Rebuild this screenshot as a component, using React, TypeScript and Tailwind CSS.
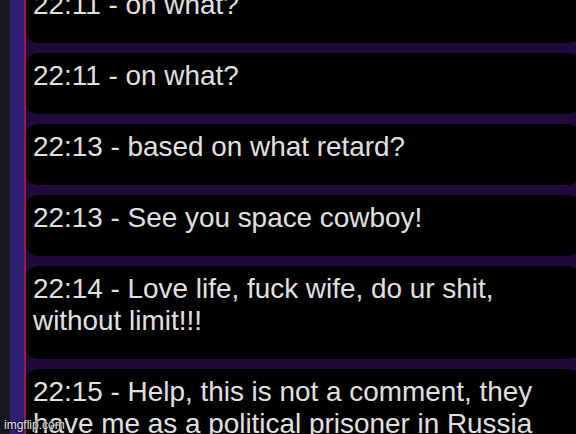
import React from "react";

const messages: string[] = [
  "22:11 - on what?",
  "22:11 - on what?",
  "22:13 - based on what retard?",
  "22:13 - See you space cowboy!",
  "22:14 - Love life, fuck wife, do ur shit, without limit!!!",
  "22:15 - Help, this is not a comment, they have me as a political prisoner in Russia",
];

export default function App() {
  return (
    <div
      className="relative w-[576px] h-[434px] overflow-hidden flex bg-black"
      style={{ fontFamily: '"Liberation Sans", Arial, sans-serif' }}
    >
      <div className="w-[10px] shrink-0 bg-[#18171e]" />
      <div className="w-[14px] shrink-0 bg-[#301e72]" />
      <div className="w-[2px] shrink-0 bg-[#9a1a46]" />
      <div className="flex-1 min-w-0 bg-[#200a3b] overflow-hidden">
        <div className="flex flex-col gap-[10px] mt-[-18px] mr-[-4px]">
          {messages.map((m, i) => (
            <div
              key={i}
              className="bg-black rounded-[12px] pl-[7px] pr-[10px] pt-[7px] pb-[22px] text-[27.9px] leading-[32px] text-[#e0e0e0]"
            >
              {m}
            </div>
          ))}
        </div>
      </div>
      <div
        className="absolute left-[4px] bottom-[2px] text-[12px] leading-[14px] text-[#e8e8e8]"
        style={{ textShadow: "0 0 2px #000, 0 0 2px #000" }}
      >
        imgflip.com
      </div>
    </div>
  );
}
